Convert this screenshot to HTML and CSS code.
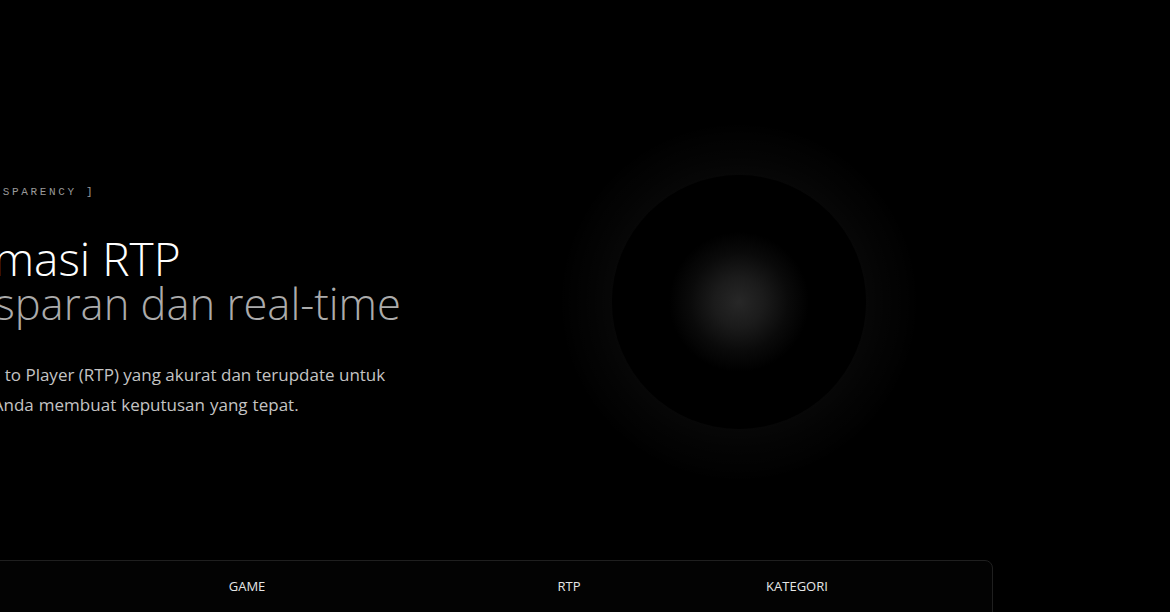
FILE: index.html
```html
<!DOCTYPE html>
<html lang="id">
<head>
<meta charset="utf-8">
<title>Informasi RTP</title>
<link rel="stylesheet" href="styles.css">
</head>
<body>
<main class="page">
  <section class="hero">
    <div class="hero-text">
      <div class="tag">[ DATA TRANSPARENCY ]</div>
      <h1 class="title">
        <span class="title-main">Informasi RTP</span>
        <span class="title-sub">Transparan dan real-time</span>
      </h1>
      <p class="lead">
        <span class="lead-line">Detail Return to Player (RTP) yang akurat dan terupdate untuk</span>
        <span class="lead-line lead-line-2">membantu Anda membuat keputusan yang tepat.</span>
      </p>
    </div>
    <div class="orb-wrap">
      <div class="orb-halo">
        <div class="orb">
          <div class="orb-glow"></div>
        </div>
      </div>
    </div>
  </section>

  <section class="table-card">
    <div class="table-head">
      <div class="th"></div>
      <div class="th">Game</div>
      <div class="th">RTP</div>
      <div class="th">Kategori</div>
      <div class="th"></div>
    </div>
  </section>
</main>
</body>
</html>
```

FILE: styles.css
```css
html, body {
  margin: 0;
  padding: 0;
  background: #000;
  height: 100%;
  overflow: hidden;
}

body {
  font-family: "Open Sans", "Noto Sans", sans-serif;
  color: #fff;
}

.page {
  width: 1097px;
  margin-left: -104px;
  padding-top: 122px;
}

.hero {
  display: grid;
  grid-template-columns: 588px 1fr;
  align-items: center;
}

.hero-text {
  display: flex;
  flex-direction: column;
}

.tag {
  font-family: "Liberation Mono", "DejaVu Sans Mono", monospace;
  font-size: 11px;
  line-height: 16px;
  letter-spacing: 2.65px;
  color: #9a9a9a;
  margin-left: 5px;
  white-space: nowrap;
}

.title {
  margin: 34px 0 0;
  font-weight: 300;
  display: flex;
  flex-direction: column;
  white-space: nowrap;
}

.title-main {
  color: #fff;
  font-size: 46px;
  line-height: 48px;
}

.title-sub {
  color: #ababab;
  font-size: 43.5px;
  line-height: 44px;
  margin-left: 10px;
}

.lead {
  margin: 34px 0 0;
  font-size: 17px;
  line-height: 30px;
  color: #c4c4c4;
  white-space: nowrap;
  display: flex;
  flex-direction: column;
}

.lead-line-2 {
  margin-left: 4px;
  word-spacing: 0.6px;
}

.orb-wrap {
  display: flex;
  justify-content: center;
}

.orb-halo {
  width: 360px;
  height: 360px;
  border-radius: 50%;
  display: flex;
  align-items: center;
  justify-content: center;
  background: radial-gradient(circle closest-side,
    rgba(255,255,255,0.026) 70%,
    rgba(255,255,255,0.017) 82%,
    rgba(255,255,255,0.006) 93%,
    rgba(255,255,255,0) 100%);
}

.orb {
  width: 254px;
  height: 254px;
  border-radius: 50%;
  background: #000;
  display: flex;
  align-items: center;
  justify-content: center;
}

.orb-glow {
  width: 140px;
  height: 140px;
  border-radius: 50%;
  background: radial-gradient(circle closest-side,
    #272727 0%,
    #1b1b1b 35%,
    #0a0a0a 70%,
    rgba(0,0,0,0) 100%);
}

.table-card {
  margin-top: 78px;
  border: 1px solid #1f1f1f;
  border-radius: 8px;
  background: #030303;
  height: 120px;
}

.table-head {
  display: grid;
  grid-template-columns: 184px 332px 312px 144px 1fr;
  padding: 16px 0 18px;
}

.th {
  text-align: center;
  text-transform: uppercase;
  font-size: 13px;
  line-height: 18px;
  color: #e6e6e6;
}
```
